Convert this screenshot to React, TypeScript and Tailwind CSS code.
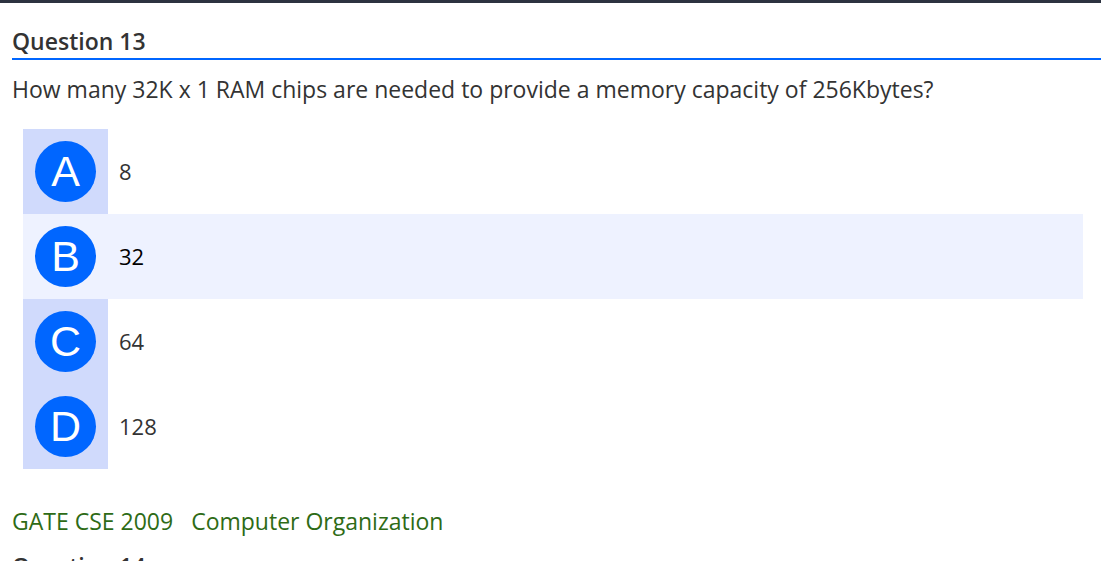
const options = [
  { letter: "A", text: "8" },
  { letter: "B", text: "32", active: true },
  { letter: "C", text: "64" },
  { letter: "D", text: "128" },
];

export default function App() {
  return (
    <div className="min-h-screen bg-white text-[#333] font-['Open_Sans',sans-serif] overflow-hidden">
      <div className="h-[3px] bg-[#2d3340]" />
      <div className="pl-3 pt-[21px]">
        <h2 className="text-[23px] leading-[34px] font-semibold border-b-2 border-[#0066ff]">
          Question 13
        </h2>
        <p className="mt-[9px] text-[23px] leading-[40px]">
          How many 32K x 1 RAM chips are needed to provide a memory capacity of 256Kbytes?
        </p>
        <div className="mt-[20px] ml-[11px] mr-[18px] flex flex-col">
          {options.map((o) => (
            <div
              key={o.letter}
              className={`flex items-center h-[85px] ${o.active ? "bg-[#eef2ff] text-black" : ""}`}
            >
              <div
                className={`w-[85px] h-full flex items-center justify-center ${o.active ? "" : "bg-[#d0dafc]"}`}
              >
                <span className="w-[61px] h-[61px] rounded-full bg-[#0066ff] text-white flex items-center justify-center text-[43px] font-['Liberation_Sans',sans-serif]">
                  {o.letter}
                </span>
              </div>
              <span className="ml-[11px] text-[22px]">{o.text}</span>
            </div>
          ))}
        </div>
        <div className="mt-[37px] flex gap-[18px] text-[23px] leading-[30px] text-[#2e6b16]">
          <span>GATE CSE 2009</span>
          <span>Computer Organization</span>
        </div>
        <h2 className="mt-[13px] text-[23px] leading-[34px] font-semibold">Question 14</h2>
      </div>
    </div>
  );
}
